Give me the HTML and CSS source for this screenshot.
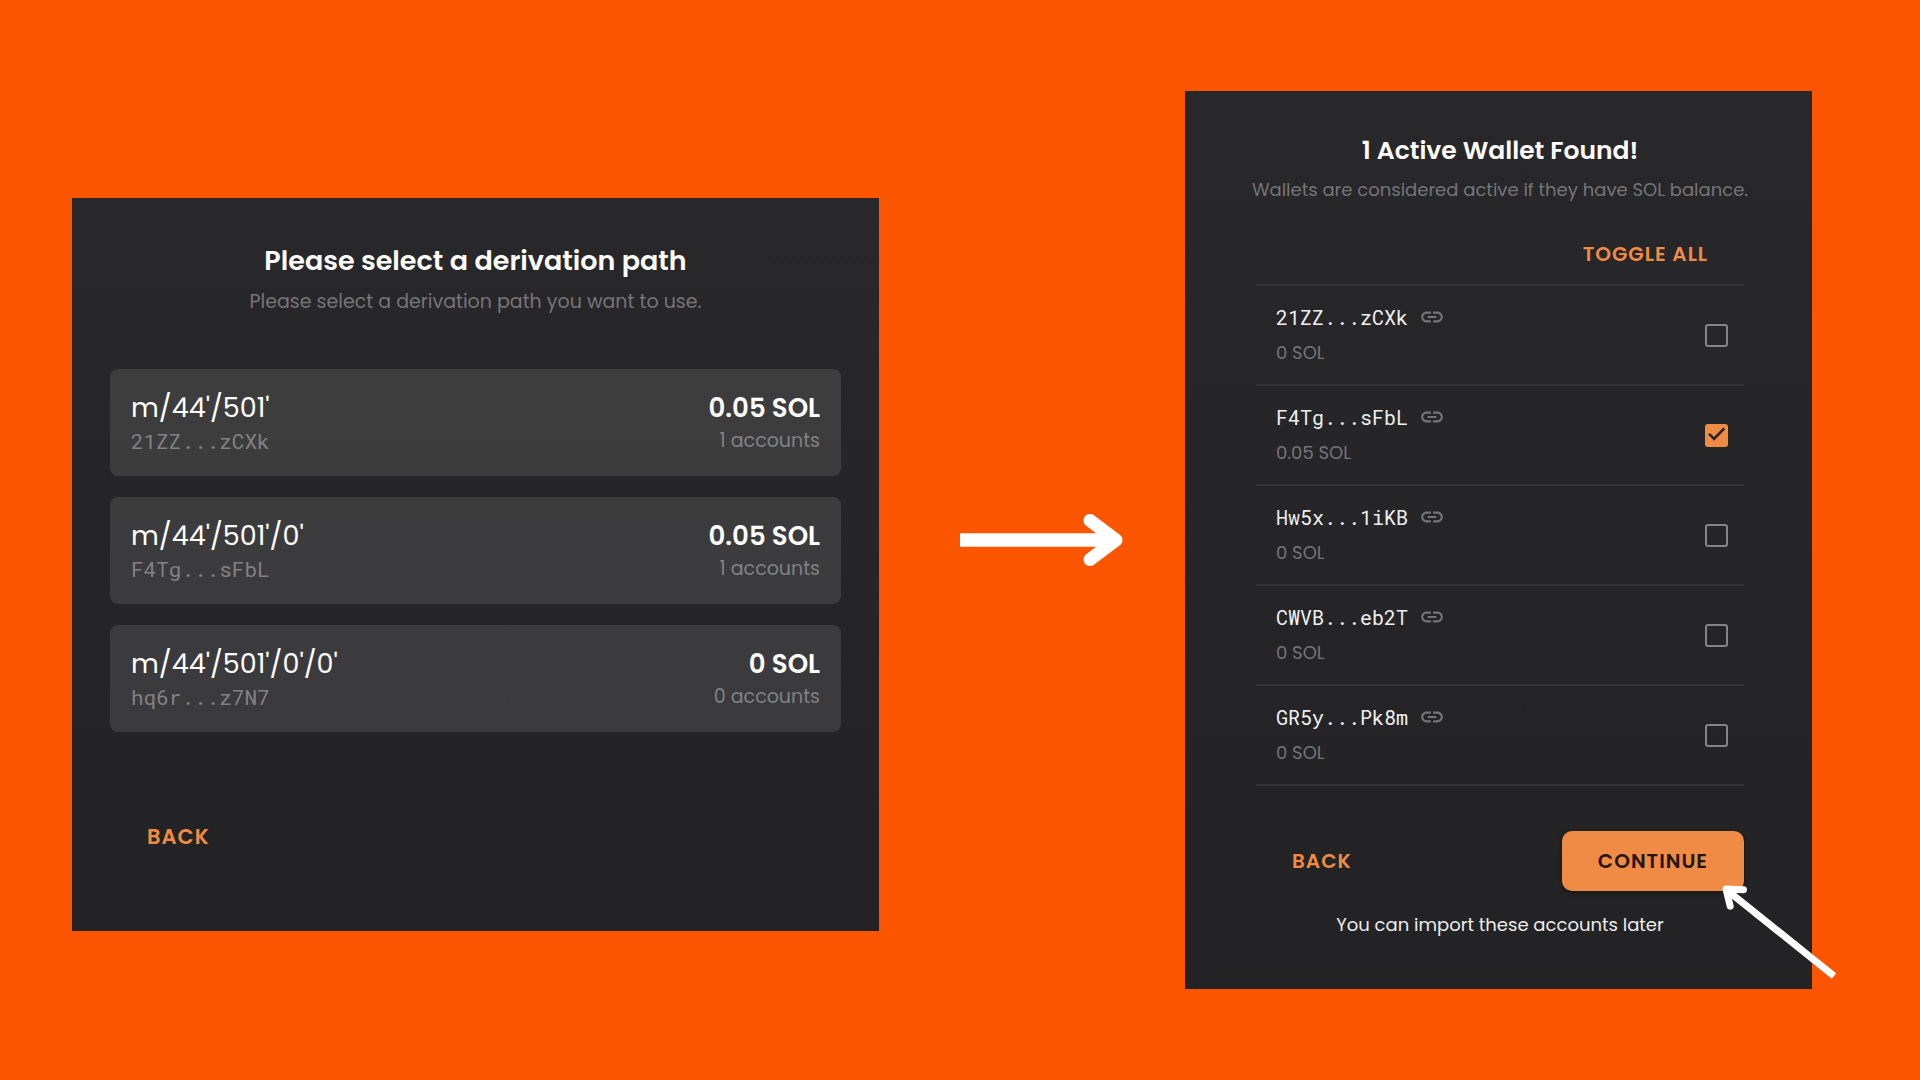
FILE: index.html
```html
<!DOCTYPE html>
<html lang="en">
<head>
<meta charset="utf-8">
<meta name="viewport" content="width=device-width, initial-scale=1">
<title>Import wallet accounts</title>
<link rel="stylesheet" href="styles.css">
</head>
<body>
<svg class="defs" aria-hidden="true">
  <symbol id="link" viewBox="0 0 24 24"><path d="M3.900 12c0-1.710 1.390-3.100 3.100-3.100h4V7H7c-2.760 0-5 2.240-5 5s2.240 5 5 5h4v-1.900H7c-1.710 0-3.100-1.390-3.100-3.100zM8 13h8v-2H8v2zm9-6h-4v1.900h4c1.710 0 3.100 1.390 3.100 3.100s-1.390 3.100-3.100 3.100h-4V17h4c2.760 0 5-2.240 5-5s-2.240-5-5-5z"/></symbol>
</svg>
<main class="stage">
  <section class="panel panel-paths">
    <h1 class="title title-large">Please select a derivation path</h1>
    <p class="subtitle subtitle-large">Please select a derivation path you want to use.</p>
    <div class="paths">
      <button class="path-card" type="button">
        <span class="path">m/44'/501'</span><span class="amount">0.05 SOL</span>
        <span class="address">21ZZ...zCXk</span><span class="count">1 accounts</span>
      </button>
      <button class="path-card" type="button">
        <span class="path">m/44'/501'/0'</span><span class="amount">0.05 SOL</span>
        <span class="address">F4Tg...sFbL</span><span class="count">1 accounts</span>
      </button>
      <button class="path-card" type="button">
        <span class="path">m/44'/501'/0'/0'</span><span class="amount">0 SOL</span>
        <span class="address">hq6r...z7N7</span><span class="count">0 accounts</span>
      </button>
    </div>
    <button class="text-button text-button-large" type="button">Back</button>
  </section>

  <svg class="flow-arrow" viewBox="0 0 163 52" aria-hidden="true">
    <path d="M0 26H150" stroke-width="13.500"/>
    <path d="M130 6.500L156 26L130 45.500" stroke-width="13" stroke-linecap="round" stroke-linejoin="round"/>
  </svg>

  <section class="panel panel-wallets">
    <h2 class="title">1 Active Wallet Found!</h2>
    <p class="subtitle">Wallets are considered active if they have SOL balance.</p>
    <button class="text-button toggle" type="button">Toggle all</button>
    <ul class="wallets">
      <li class="wallet">
        <label class="wallet-name" for="w1">21ZZ...zCXk</label>
        <a class="wallet-link" href="#w1" aria-label="View 21ZZ...zCXk"><svg class="icon" aria-hidden="true"><use href="#link"/></svg></a>
        <span class="balance">0 SOL</span>
        <input class="check" type="checkbox" id="w1">
      </li>
      <li class="wallet">
        <label class="wallet-name" for="w2">F4Tg...sFbL</label>
        <a class="wallet-link" href="#w2" aria-label="View F4Tg...sFbL"><svg class="icon" aria-hidden="true"><use href="#link"/></svg></a>
        <span class="balance">0.05 SOL</span>
        <input class="check" type="checkbox" id="w2" checked>
      </li>
      <li class="wallet">
        <label class="wallet-name" for="w3">Hw5x...1iKB</label>
        <a class="wallet-link" href="#w3" aria-label="View Hw5x...1iKB"><svg class="icon" aria-hidden="true"><use href="#link"/></svg></a>
        <span class="balance">0 SOL</span>
        <input class="check" type="checkbox" id="w3">
      </li>
      <li class="wallet">
        <label class="wallet-name" for="w4">CWVB...eb2T</label>
        <a class="wallet-link" href="#w4" aria-label="View CWVB...eb2T"><svg class="icon" aria-hidden="true"><use href="#link"/></svg></a>
        <span class="balance">0 SOL</span>
        <input class="check" type="checkbox" id="w4">
      </li>
      <li class="wallet">
        <label class="wallet-name" for="w5">GR5y...Pk8m</label>
        <a class="wallet-link" href="#w5" aria-label="View GR5y...Pk8m"><svg class="icon" aria-hidden="true"><use href="#link"/></svg></a>
        <span class="balance">0 SOL</span>
        <input class="check" type="checkbox" id="w5">
      </li>
    </ul>
    <div class="actions">
      <button class="text-button" type="button">Back</button>
      <button class="text-button primary" type="button">Continue</button>
    </div>
    <p class="note">You can import these accounts later</p>
    <svg class="pointer" viewBox="0 0 120 100" aria-hidden="true">
      <path d="M8 7L114 92" stroke-width="7"/>
      <path d="M23.500 5.700L6 5L10.200 22.200" stroke-width="7" stroke-linecap="round" stroke-linejoin="round"/>
    </svg>
  </section>
</main>
</body>
</html>
```
FILE: styles.css
```css
:root {
  --accent: #f08b45;
  --muted: #757577;
  --mono: "Roboto Mono", "DejaVu Sans Mono", "Liberation Mono", monospace;
}

* {
  box-sizing: border-box;
}

body {
  margin: 0;
  background: #fb5500;
  color: #fff;
  font-family: Poppins, Inter, "Open Sans", sans-serif;
}

button {
  font: inherit;
  color: inherit;
  cursor: pointer;
}

.defs {
  display: none;
}

.stage {
  display: grid;
  grid-template-columns:
    minmax(0, 72fr) minmax(0, 807fr) minmax(0, 81fr) minmax(0, 163fr)
    minmax(0, 62fr) minmax(0, 627fr) minmax(0, 108fr);
  align-items: center;
  min-height: 100vh;
}

.panel {
  position: relative;
  display: flex;
  flex-direction: column;
  background: linear-gradient(#28282a, #232325);
}

.panel-paths {
  grid-column: 2;
  margin-top: 48px;
  padding: 43px 38px 64px;
}

.panel-wallets {
  grid-column: 6;
  padding: 40px 68px 49px 71px;
}

.title {
  margin: 0;
  font-size: 25px;
  font-weight: 600;
  line-height: 40px;
  text-align: center;
}

.title-large {
  font-size: 27px;
}

.subtitle {
  display: flex;
  justify-content: center;
  margin: 4px 0 0;
  color: var(--muted);
  font-size: 18px;
  line-height: 30px;
  white-space: nowrap;
}

.subtitle-large {
  margin-top: 6px;
  font-size: 19px;
}

.paths {
  display: grid;
  gap: 21px;
  margin-top: 52px;
}

.path-card {
  display: grid;
  grid-template-columns: 1fr auto;
  padding: 21px 21px 20px;
  border: 0;
  border-radius: 8px;
  background: rgba(255, 255, 255, 0.1);
  text-align: left;
}

.path,
.amount {
  font-size: 27px;
  line-height: 36px;
}

.amount {
  font-size: 26px;
  font-weight: 600;
}

.address,
.count {
  color: #828284;
  font-size: 19px;
  line-height: 30px;
}

.address {
  font-family: var(--mono);
  font-size: 21px;
}

.amount,
.count {
  text-align: right;
}

.text-button {
  height: 60px;
  padding: 0 36px;
  border: 0;
  border-radius: 10px;
  background: none;
  color: var(--accent);
  font-size: 20px;
  font-weight: 600;
  letter-spacing: 1px;
  text-transform: uppercase;
}

.text-button-large {
  align-self: flex-start;
  margin-top: 75px;
  padding: 0 37px;
  font-size: 21px;
}

.toggle {
  align-self: flex-end;
  margin-top: 19px;
}

.wallets {
  margin: 0;
  padding: 0;
  border-top: 2px solid #333335;
  list-style: none;
}

.wallet {
  display: grid;
  grid-template-columns: auto 1fr auto;
  align-items: center;
  gap: 6px 11px;
  padding: 16px 16px 16px 20px;
  border-bottom: 2px solid #333335;
}

.wallet-name {
  color: #f0f0f0;
  font-family: var(--mono);
  font-size: 20px;
  line-height: 30px;
}

.wallet-link {
  display: flex;
  color: var(--muted);
}

.icon {
  width: 26px;
  height: 26px;
  fill: currentColor;
}

.balance {
  grid-column: 1;
  color: var(--muted);
  font-size: 18px;
  line-height: 30px;
}

.check {
  grid-column: 3;
  grid-row: 1 / 3;
  display: grid;
  width: 23px;
  height: 23px;
  margin: 0;
  border: 2px solid #858586;
  border-radius: 3px;
  appearance: none;
}

.check:checked {
  border-color: var(--accent);
  background: var(--accent);
}

.check:checked::before {
  content: "";
  background: #252527;
  clip-path: polygon(6% 48%, 15% 39%, 37% 61%, 86% 11%, 96% 20%, 37% 80%);
}

.actions {
  display: flex;
  justify-content: space-between;
  margin-top: 45px;
}

.primary {
  background: var(--accent);
  color: #24150c;
  box-shadow: 0 2px 5px rgba(0, 0, 0, 0.4);
}

.note {
  margin: 19px 0 0;
  color: #ededed;
  font-size: 18px;
  line-height: 30px;
  text-align: center;
}

.flow-arrow {
  grid-column: 4;
  width: 100%;
  overflow: visible;
  fill: none;
  stroke: #fff;
}

.pointer {
  position: absolute;
  right: -28px;
  bottom: 5px;
  width: 120px;
  height: 100px;
  fill: none;
  stroke: #fff;
}
```
